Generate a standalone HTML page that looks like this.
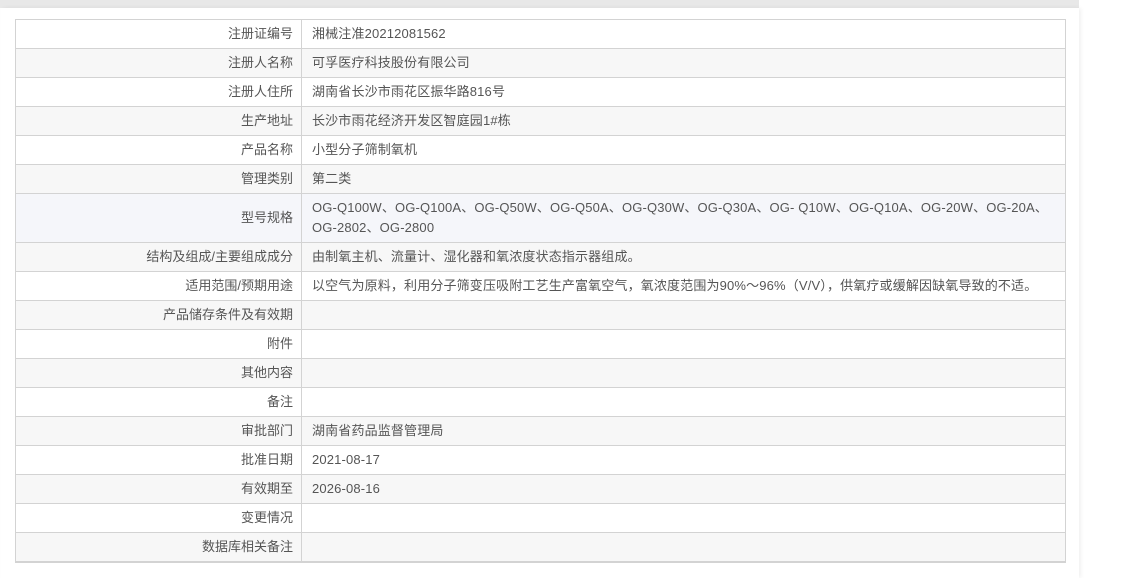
<!DOCTYPE html>
<html><head><meta charset="utf-8"><style>
body{margin:0;width:1144px;height:567px;background:#fff;overflow:hidden;font-family:"Liberation Sans","Noto Sans CJK SC",sans-serif;font-size:13px;color:#555}
.top{position:absolute;left:0;top:0;width:1079px;height:8px;background:#e8e8e8}
.panel{position:absolute;left:1px;top:8px;width:1078px;height:570px;background:#fff;box-shadow:2px 0 4px rgba(0,0,0,0.06)}
table{position:absolute;left:15px;top:19px;width:1051px;border-collapse:collapse;border:1px solid #d3d3d3;border-bottom:2px solid #d3d3d3}
td{border:1px solid #d3d3d3;height:28px;padding:0 10px;line-height:20px;vertical-align:middle}
td.l{width:267px;text-align:right;padding:0 8px 0 10px}
td.v{letter-spacing:0.15px}
tr:nth-child(even) td{background:#f7f7f7}
tr.h td{background:#f5f6fa;height:48px}
</style></head><body>
<div class="top"></div><div class="panel"></div>
<table>
<tr><td class="l">注册证编号</td><td class="v">湘械注准20212081562</td></tr>
<tr><td class="l">注册人名称</td><td class="v">可孚医疗科技股份有限公司</td></tr>
<tr><td class="l">注册人住所</td><td class="v">湖南省长沙市雨花区振华路816号</td></tr>
<tr><td class="l">生产地址</td><td class="v">长沙市雨花经济开发区智庭园1#栋</td></tr>
<tr><td class="l">产品名称</td><td class="v">小型分子筛制氧机</td></tr>
<tr><td class="l">管理类别</td><td class="v">第二类</td></tr>
<tr class="h"><td class="l">型号规格</td><td class="v">OG-Q100W、OG-Q100A、OG-Q50W、OG-Q50A、OG-Q30W、OG-Q30A、OG- Q10W、OG-Q10A、OG-20W、OG-20A、<br>OG-2802、OG-2800</td></tr>
<tr><td class="l">结构及组成/主要组成成分</td><td class="v">由制氧主机、流量计、湿化器和氧浓度状态指示器组成。</td></tr>
<tr><td class="l">适用范围/预期用途</td><td class="v">以空气为原料，利用分子筛变压吸附工艺生产富氧空气，氧浓度范围为90%～96%（V/V），供氧疗或缓解因缺氧导致的不适。</td></tr>
<tr><td class="l">产品储存条件及有效期</td><td></td></tr>
<tr><td class="l">附件</td><td></td></tr>
<tr><td class="l">其他内容</td><td></td></tr>
<tr><td class="l">备注</td><td></td></tr>
<tr><td class="l">审批部门</td><td class="v">湖南省药品监督管理局</td></tr>
<tr><td class="l">批准日期</td><td class="v">2021-08-17</td></tr>
<tr><td class="l">有效期至</td><td class="v">2026-08-16</td></tr>
<tr><td class="l">变更情况</td><td></td></tr>
<tr><td class="l">数据库相关备注</td><td></td></tr>
</table>
</body></html>
